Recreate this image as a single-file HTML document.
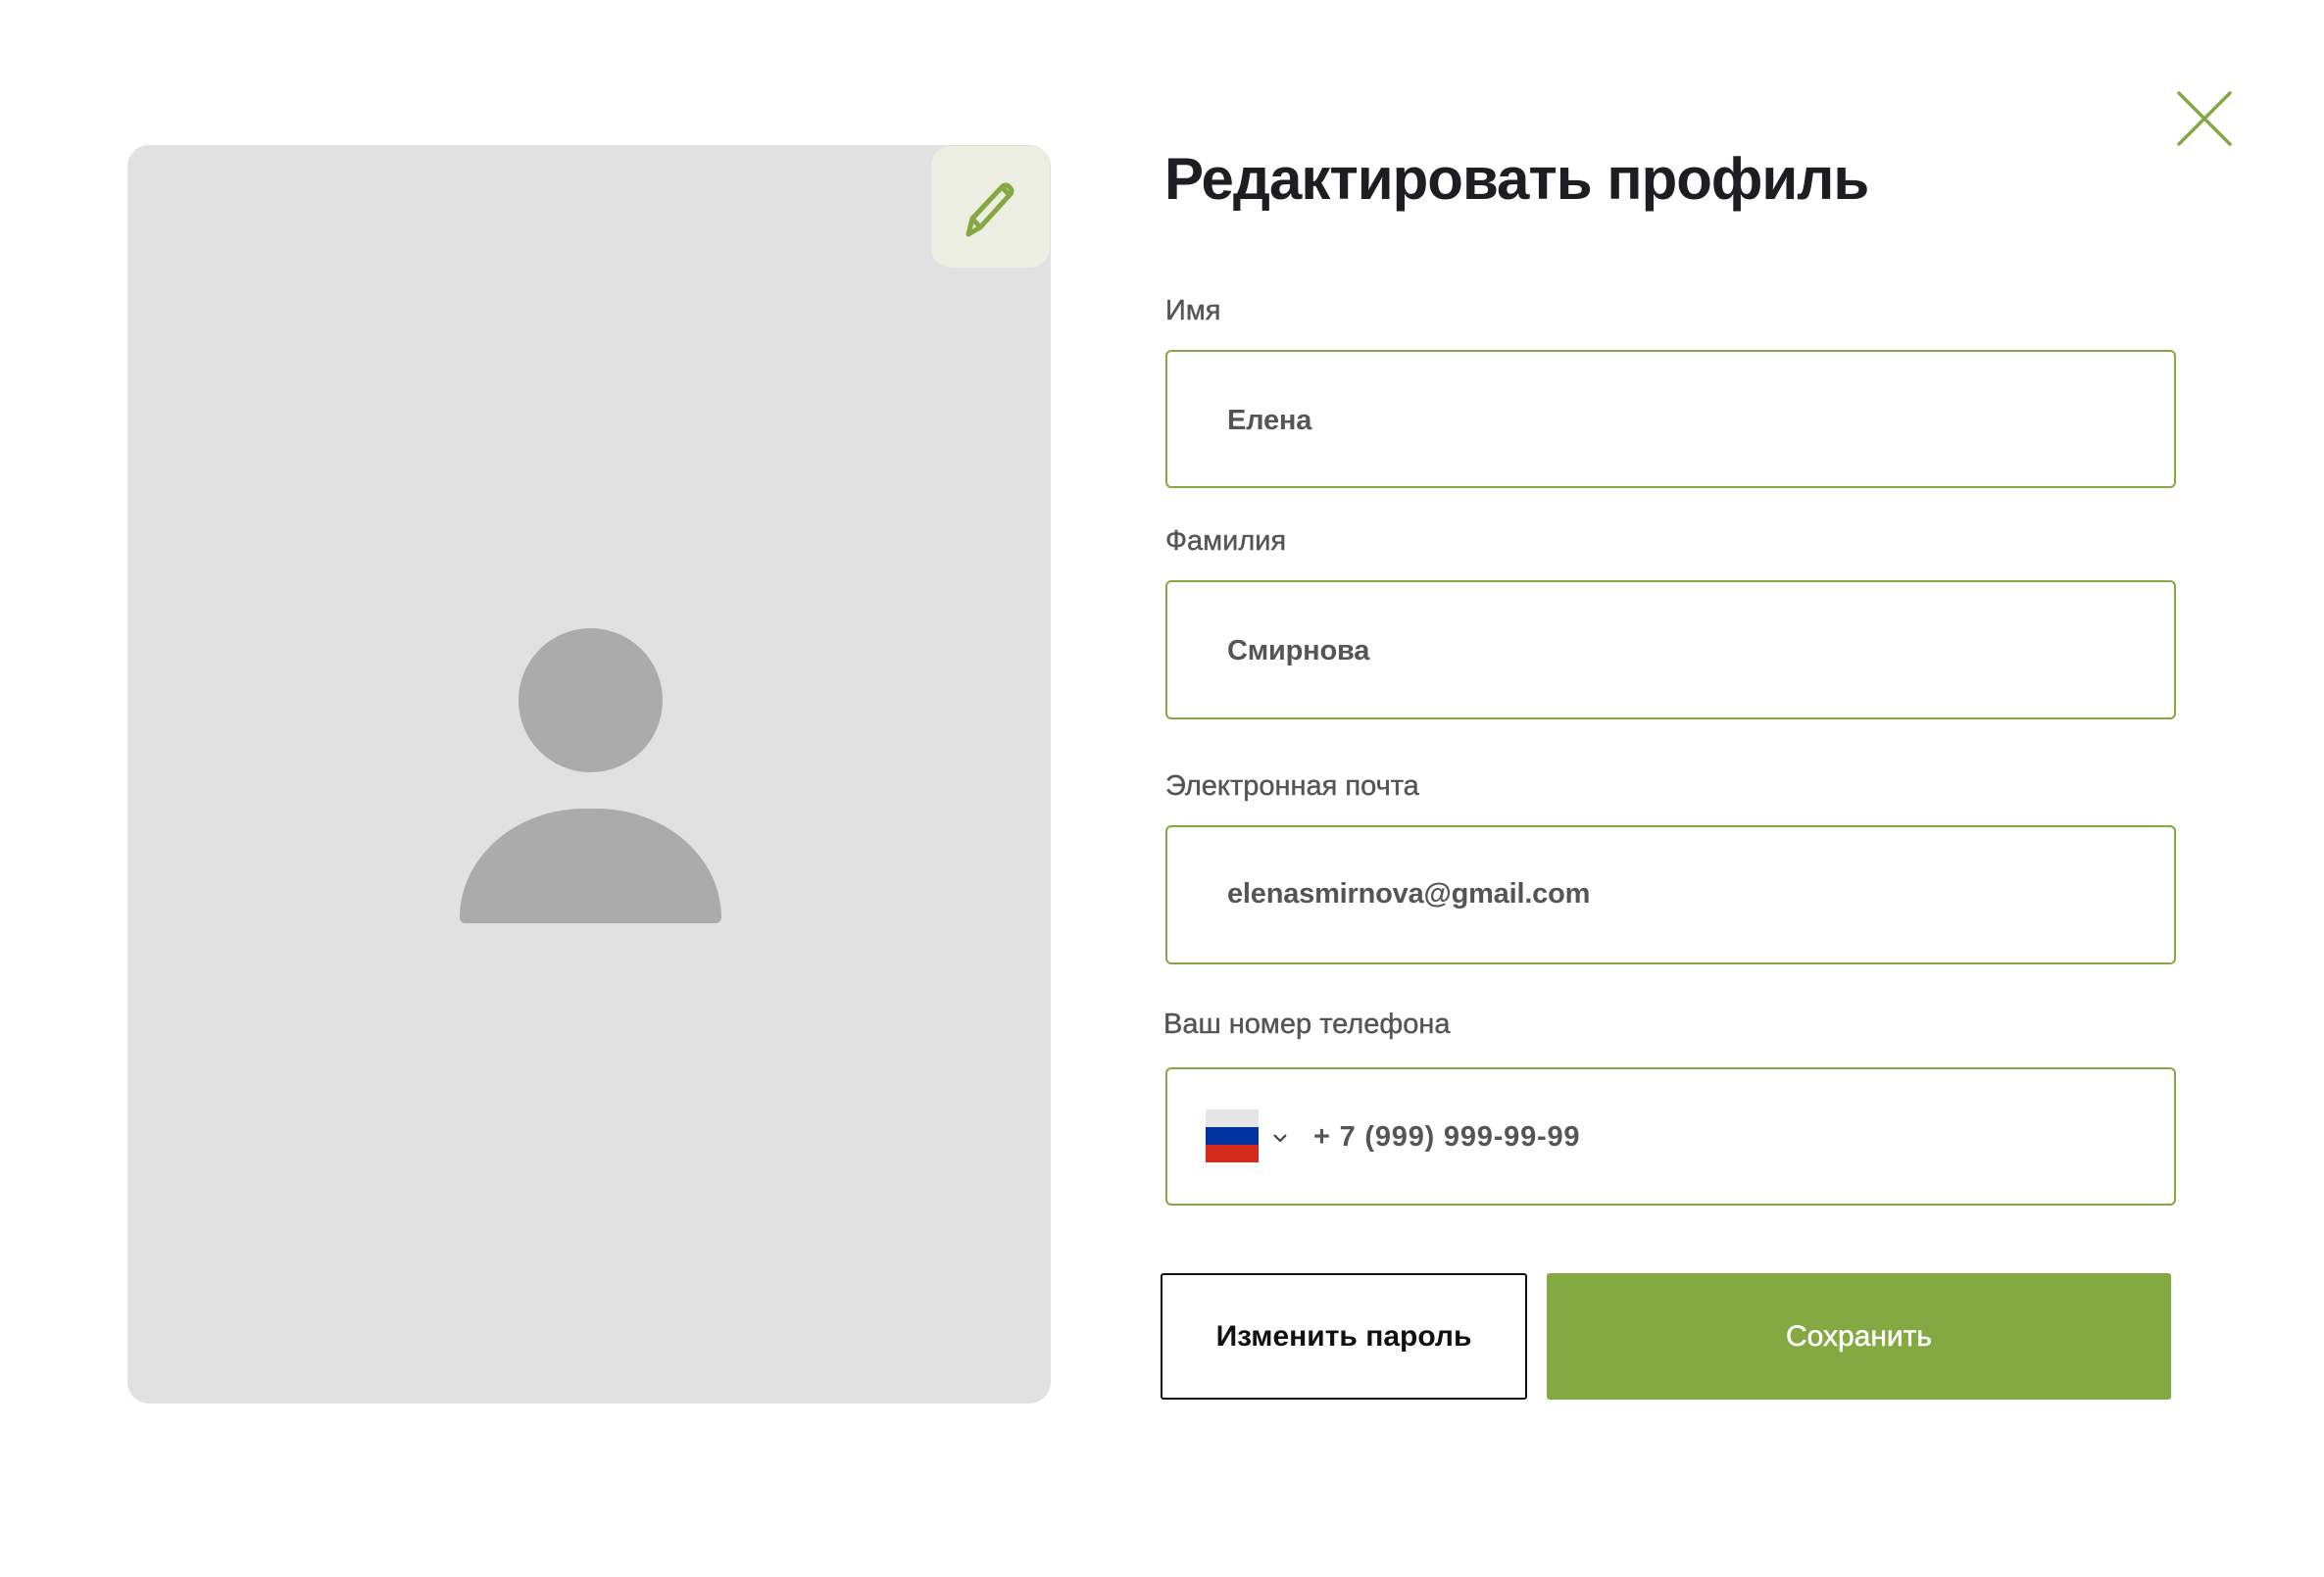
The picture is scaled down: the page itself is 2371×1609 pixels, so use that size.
<!DOCTYPE html>
<html><head><meta charset="utf-8"><style>
*{margin:0;padding:0;box-sizing:border-box}
body{width:2371px;height:1609px;background:#fff;position:relative;overflow:hidden;font-family:"Liberation Sans",sans-serif}
.a{position:absolute}
.panel{left:130px;top:148px;width:942px;height:1284px;background:#e1e1e1;border-radius:22px}
.edit{left:950px;top:149px;width:121px;height:124px;background:#ebeee0;border-radius:20px}
.title{left:1188px;top:143px;font-size:60px;font-weight:bold;color:#1c1e21;letter-spacing:-1px;white-space:nowrap;line-height:80px}
.lbl{left:1189px;font-size:29px;color:#555;white-space:nowrap;line-height:36px;-webkit-text-stroke:0.4px #555}
.inp{left:1189px;width:1031px;border:2px solid #84a842;border-radius:6px}
.val{font-size:29px;font-weight:bold;color:#555;white-space:nowrap;line-height:36px;letter-spacing:-0.2px}
.btn{display:flex;align-items:center;justify-content:center;font-size:30px;white-space:nowrap}
</style></head><body>
<div class="a panel"></div>
<div class="a edit"></div>
<svg class="a" style="left:980px;top:180px" width="60" height="64" viewBox="0 0 60 64">
<g fill="none" stroke="#84a842" stroke-width="5" stroke-linejoin="round" stroke-linecap="round">
<path d="M8 59 L12 43 L42 11 Q46 7 50 11 Q54 15 50 19 L20 52 Z"/>
<path d="M12 43 L20 52"/><path d="M42 11 L50 19"/>
</g></svg>
<div class="a" style="left:529px;top:641px;width:147px;height:147px;border-radius:50%;background:#ababab"></div>
<div class="a" style="left:469px;top:825px;width:267px;height:117px;background:#ababab;border-radius:134px 134px 6px 6px / 117px 117px 6px 6px"></div>
<svg class="a" style="left:2220px;top:92px" width="60" height="60" viewBox="0 0 60 60"><g stroke="#84a842" stroke-width="3.5" stroke-linecap="round"><path d="M3 3 L55 55"/><path d="M55 3 L3 55"/></g></svg>
<div class="a title">Редактировать профиль</div>
<div class="a lbl" style="top:299px">Имя</div>
<div class="a inp" style="top:357px;height:141px"></div>
<div class="a val" style="left:1252px;top:411px">Елена</div>
<div class="a lbl" style="top:534px">Фамилия</div>
<div class="a inp" style="top:592px;height:142px"></div>
<div class="a val" style="left:1252px;top:646px">Смирнова</div>
<div class="a lbl" style="top:784px">Электронная почта</div>
<div class="a inp" style="top:842px;height:142px"></div>
<div class="a val" style="left:1252px;top:894px">elenasmirnova@gmail.com</div>
<div class="a lbl" style="left:1187px;top:1027px">Ваш номер телефона</div>
<div class="a inp" style="top:1089px;height:141px"></div>
<div class="a" style="left:1230px;top:1132px;width:54px;height:18px;background:#e6e6e6"></div>
<div class="a" style="left:1230px;top:1150px;width:54px;height:18px;background:#0033a0"></div>
<div class="a" style="left:1230px;top:1168px;width:54px;height:18px;background:#d52b1e"></div>
<svg class="a" style="left:1298px;top:1155px" width="16" height="12" viewBox="0 0 16 12"><path d="M2 3 L8 9 L14 3" fill="none" stroke="#444" stroke-width="2.2"/></svg>
<div class="a val" style="left:1340px;top:1142px;letter-spacing:0.8px">+ 7 (999) 999-99-99</div>
<div class="a btn" style="left:1184px;top:1299px;width:374px;height:129px;border:2px solid #111;border-radius:3px;color:#111;font-weight:bold">Изменить пароль</div>
<div class="a btn" style="left:1578px;top:1299px;width:637px;height:129px;background:#84a842;border-radius:3px;color:#fff;-webkit-text-stroke:0.5px #fff">Сохранить</div>
</body></html>
